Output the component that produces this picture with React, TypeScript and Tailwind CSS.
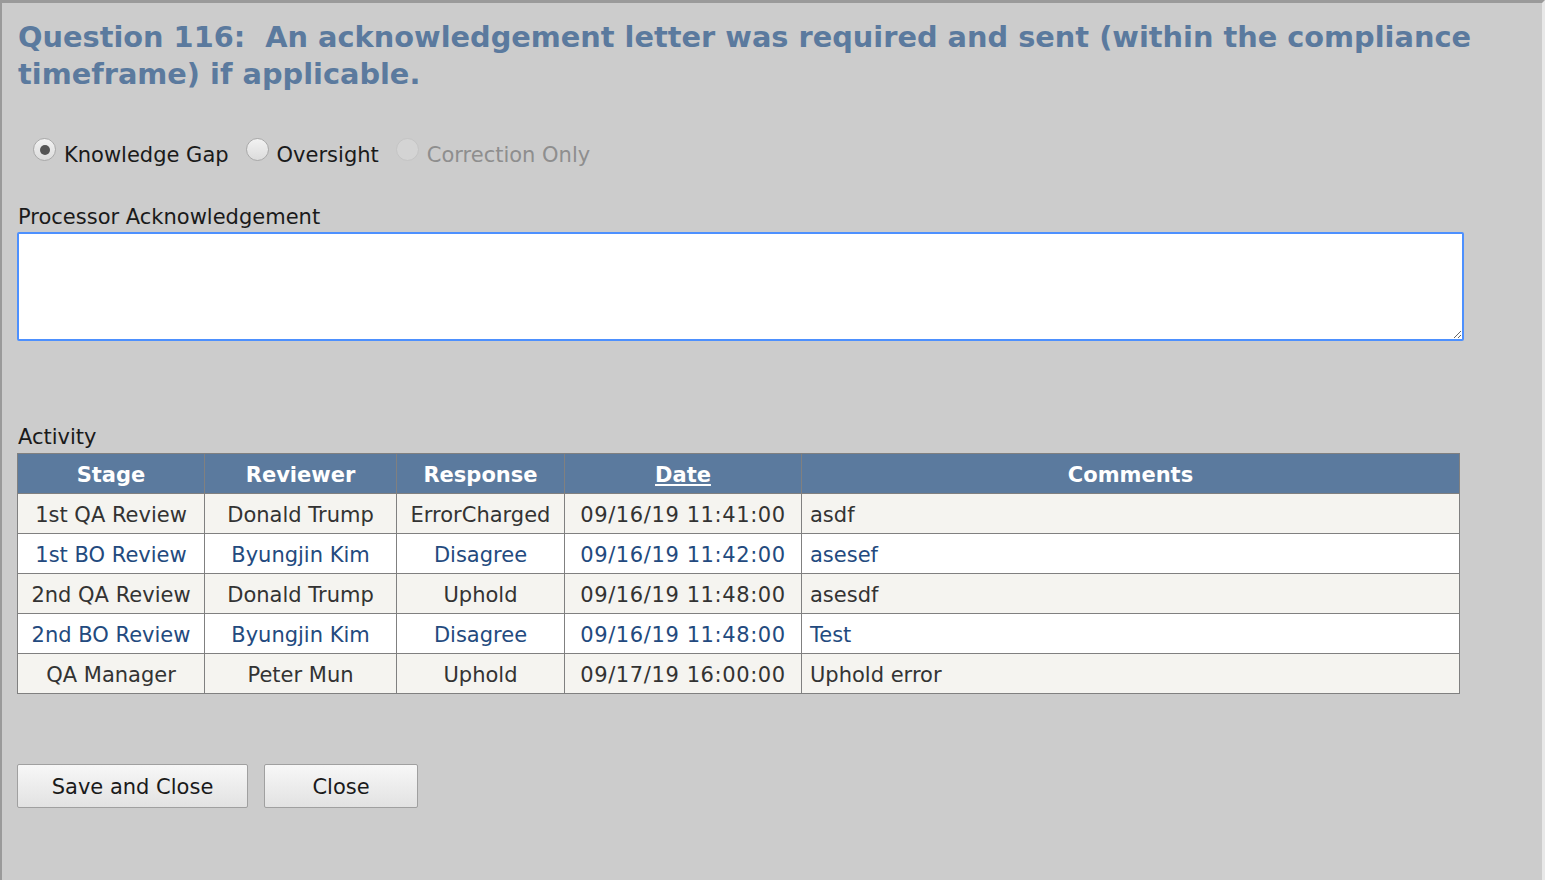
import React from "react";

const rows = [
  { stage: "1st QA Review", reviewer: "Donald Trump", response: "ErrorCharged", date: "09/16/19 11:41:00", comments: "asdf" },
  { stage: "1st BO Review", reviewer: "Byungjin Kim", response: "Disagree", date: "09/16/19 11:42:00", comments: "asesef" },
  { stage: "2nd QA Review", reviewer: "Donald Trump", response: "Uphold", date: "09/16/19 11:48:00", comments: "asesdf" },
  { stage: "2nd BO Review", reviewer: "Byungjin Kim", response: "Disagree", date: "09/16/19 11:48:00", comments: "Test" },
  { stage: "QA Manager", reviewer: "Peter Mun", response: "Uphold", date: "09/17/19 16:00:00", comments: "Uphold error" },
];

function Radio({ label, checked, disabled }: { label: string; checked?: boolean; disabled?: boolean }) {
  return (
    <label className="flex items-start gap-[8px]">
      <span
        className={
          disabled
            ? "flex h-[23px] w-[23px] items-center justify-center rounded-full border border-[#c4c4c4] bg-[#d4d4d4]"
            : "flex h-[23px] w-[23px] items-center justify-center rounded-full border border-[#a9a9a9] bg-gradient-to-b from-[#f2f2f2] to-[#dcdcdc]"
        }
      >
        {checked && <span className="h-[10px] w-[10px] rounded-full bg-[#555]" />}
      </span>
      <span className={disabled ? "pt-[5px] leading-[25px] text-[#8e8e8e]" : "pt-[5px] leading-[25px] text-[#1a1a1a]"}>{label}</span>
    </label>
  );
}

export default function App() {
  return (
    <div className="h-[880px] w-[1545px] overflow-hidden bg-[#cccccc] border-t-[3px] border-l-2 border-r-[3px] border-[#9a9a9a] border-r-[#e8e8e8] font-['DejaVu_Sans',sans-serif] text-[21px] text-[#1a1a1a]">
      <div className="pl-[15px] pt-[16px]">
        <h1 className="w-[1500px] pl-px text-[28.8px] font-bold leading-[37px] text-[#5b7a9e]">
          Question 116:&nbsp; An acknowledgement letter was required and sent (within the compliance
          <br />
          timeframe) if applicable.
        </h1>

        <div className="mt-[45px] flex items-start gap-[17px] pl-[16px]">
          <Radio label="Knowledge Gap" checked />
          <Radio label="Oversight" />
          <Radio label="Correction Only" disabled />
        </div>

        <div className="mt-[36px] pl-px leading-[26px]">Processor Acknowledgement</div>
        <textarea
          className="mt-[2px] block h-[109px] w-[1447px] resize-y rounded-[2px] border-2 border-[#4d90fe] bg-white px-[5px] py-[3px] outline-none"
          autoFocus
        />

        <div className="mt-[83px] pl-px leading-[26px]">Activity</div>
        <table className="mt-[3px] w-[1443px] border-collapse border border-[#808080] leading-[36px]">
          <thead>
            <tr className="bg-[#5b7a9e] text-white">
              <th className="w-[187px] border border-[#808080] pt-[3px] font-bold">Stage</th>
              <th className="w-[192px] border border-[#808080] pt-[3px] font-bold">Reviewer</th>
              <th className="w-[168px] border border-[#808080] pt-[3px] font-bold">Response</th>
              <th className="w-[237px] border border-[#808080] pt-[3px] font-bold underline">Date</th>
              <th className="border border-[#808080] pt-[3px] font-bold">Comments</th>
            </tr>
          </thead>
          <tbody>
            {rows.map((r, i) => (
              <tr key={i} className={i % 2 === 0 ? "bg-[#f5f4f0] text-[#333]" : "bg-white text-[#234a7e]"}>
                <td className="border border-[#808080] pt-[3px] text-center">{r.stage}</td>
                <td className="border border-[#808080] pt-[3px] text-center">{r.reviewer}</td>
                <td className="border border-[#808080] pt-[3px] text-center">{r.response}</td>
                <td className="border border-[#808080] pt-[3px] text-center tracking-[0.6px]">{r.date}</td>
                <td className="border border-[#808080] px-[8px] pt-[3px] text-left">{r.comments}</td>
              </tr>
            ))}
          </tbody>
        </table>

        <div className="mt-[70px] flex gap-[16px]">
          <button className="h-[44px] w-[231px] rounded-[2px] border border-[#a0a0a0] bg-gradient-to-b from-[#f7f7f7] to-[#e2e2e2] pt-[3px] text-[#1a1a1a]">
            Save and Close
          </button>
          <button className="h-[44px] w-[154px] rounded-[2px] border border-[#a0a0a0] bg-gradient-to-b from-[#f7f7f7] to-[#e2e2e2] pt-[3px] text-[#1a1a1a]">
            Close
          </button>
        </div>
      </div>
    </div>
  );
}
